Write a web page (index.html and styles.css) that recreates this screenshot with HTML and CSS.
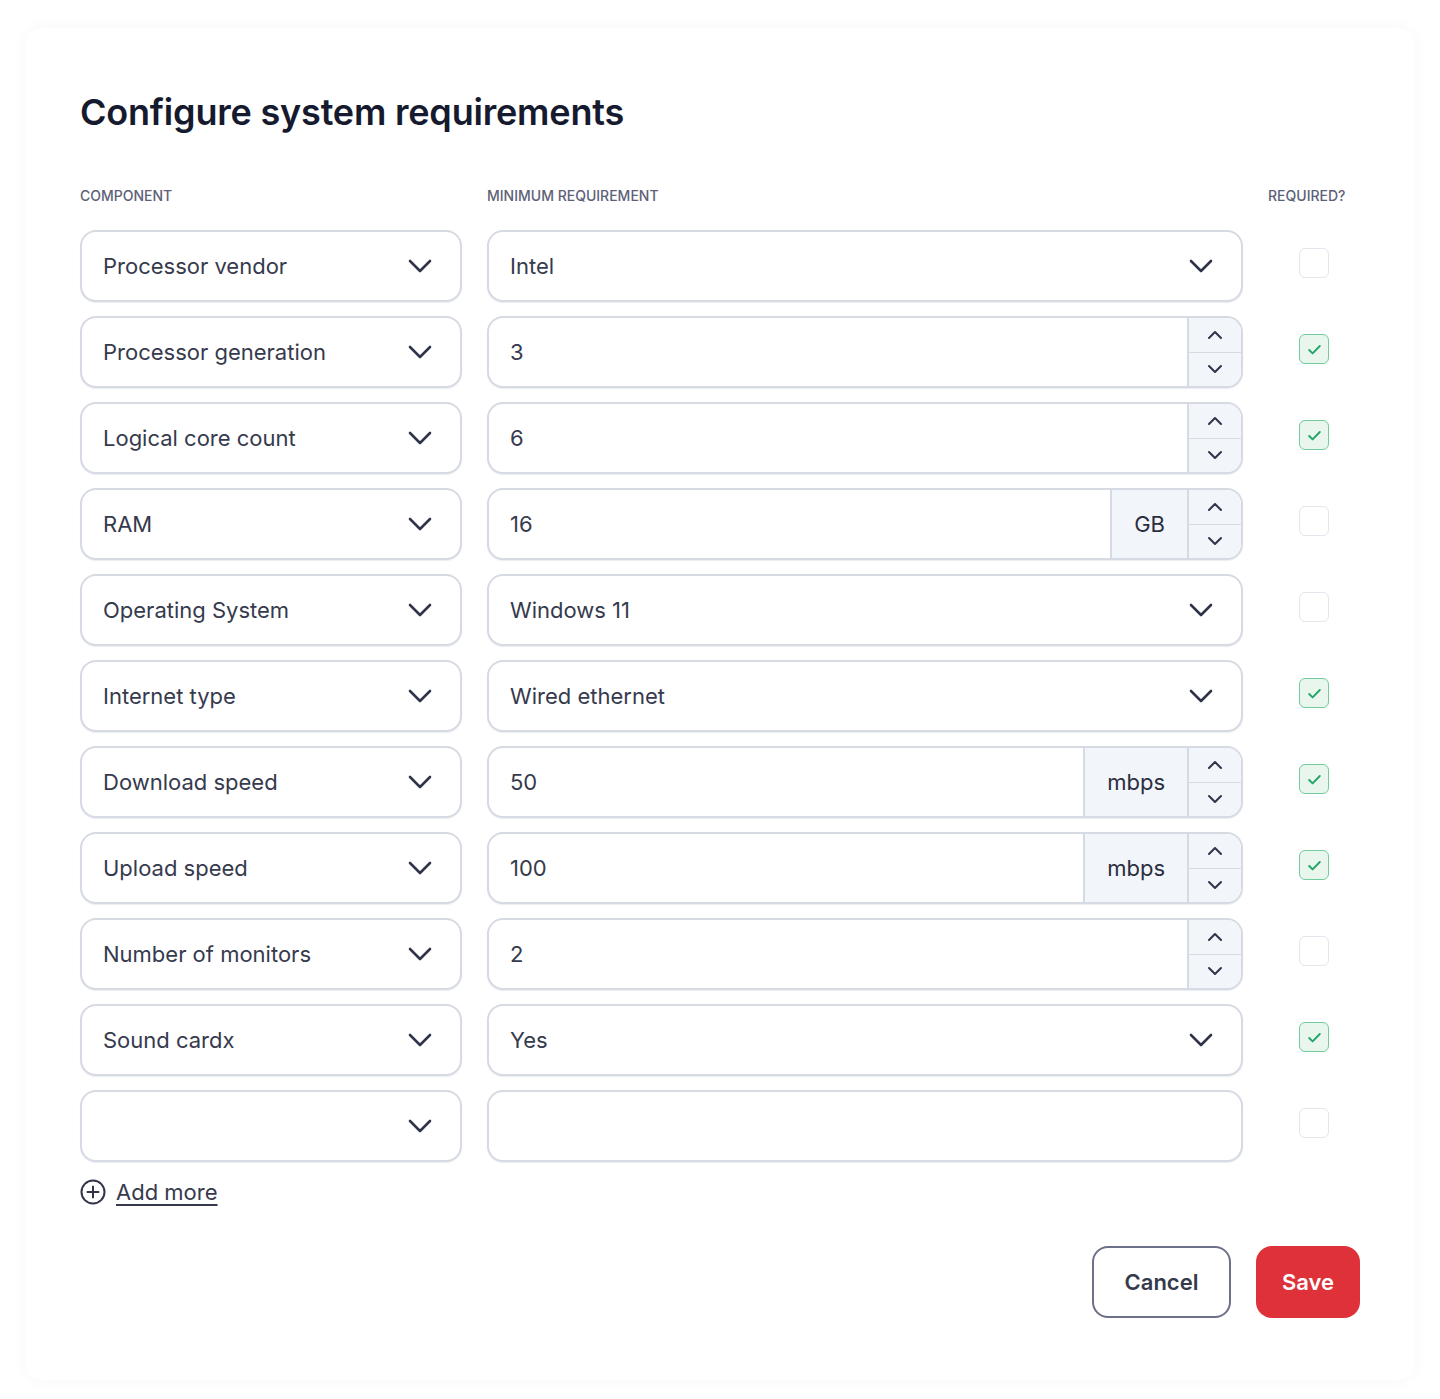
FILE: index.html
```html
<!DOCTYPE html>
<html lang="en">
<head>
<meta charset="utf-8">
<title>Configure system requirements</title>
<link rel="stylesheet" href="styles.css">
</head>
<body>
<main class="card">
  <h1 class="title">Configure system requirements</h1>

  <div class="grid">
    <div class="head">Component</div>
    <div class="head">Minimum requirement</div>
    <div class="head head-req">Required?</div>

    <!-- row 1 -->
    <div class="field select"><span class="val">Processor vendor</span><svg class="chev" viewBox="0 0 24 14"><path d="M2 2l10 10 10-10"/></svg></div>
    <div class="field select"><span class="val">Intel</span><svg class="chev" viewBox="0 0 24 14"><path d="M2 2l10 10 10-10"/></svg></div>
    <div class="req"><span class="cb"></span></div>

    <!-- row 2 -->
    <div class="field select"><span class="val">Processor generation</span><svg class="chev" viewBox="0 0 24 14"><path d="M2 2l10 10 10-10"/></svg></div>
    <div class="field number"><span class="val">3</span><div class="stepper"><span class="step"><svg viewBox="0 0 16 10"><path d="M2 8l6-6 6 6"/></svg></span><span class="step"><svg viewBox="0 0 16 10"><path d="M2 2l6 6 6-6"/></svg></span></div></div>
    <div class="req"><span class="cb on"><svg viewBox="0 0 16 16"><path d="M3 8.5l3.2 3.2 6.8-7"/></svg></span></div>

    <!-- row 3 -->
    <div class="field select"><span class="val">Logical core count</span><svg class="chev" viewBox="0 0 24 14"><path d="M2 2l10 10 10-10"/></svg></div>
    <div class="field number"><span class="val">6</span><div class="stepper"><span class="step"><svg viewBox="0 0 16 10"><path d="M2 8l6-6 6 6"/></svg></span><span class="step"><svg viewBox="0 0 16 10"><path d="M2 2l6 6 6-6"/></svg></span></div></div>
    <div class="req"><span class="cb on"><svg viewBox="0 0 16 16"><path d="M3 8.5l3.2 3.2 6.8-7"/></svg></span></div>

    <!-- row 4 -->
    <div class="field select"><span class="val">RAM</span><svg class="chev" viewBox="0 0 24 14"><path d="M2 2l10 10 10-10"/></svg></div>
    <div class="field number"><span class="val">16</span><span class="unit">GB</span><div class="stepper"><span class="step"><svg viewBox="0 0 16 10"><path d="M2 8l6-6 6 6"/></svg></span><span class="step"><svg viewBox="0 0 16 10"><path d="M2 2l6 6 6-6"/></svg></span></div></div>
    <div class="req"><span class="cb"></span></div>

    <!-- row 5 -->
    <div class="field select"><span class="val">Operating System</span><svg class="chev" viewBox="0 0 24 14"><path d="M2 2l10 10 10-10"/></svg></div>
    <div class="field select"><span class="val">Windows 11</span><svg class="chev" viewBox="0 0 24 14"><path d="M2 2l10 10 10-10"/></svg></div>
    <div class="req"><span class="cb"></span></div>

    <!-- row 6 -->
    <div class="field select"><span class="val">Internet type</span><svg class="chev" viewBox="0 0 24 14"><path d="M2 2l10 10 10-10"/></svg></div>
    <div class="field select"><span class="val">Wired ethernet</span><svg class="chev" viewBox="0 0 24 14"><path d="M2 2l10 10 10-10"/></svg></div>
    <div class="req"><span class="cb on"><svg viewBox="0 0 16 16"><path d="M3 8.5l3.2 3.2 6.8-7"/></svg></span></div>

    <!-- row 7 -->
    <div class="field select"><span class="val">Download speed</span><svg class="chev" viewBox="0 0 24 14"><path d="M2 2l10 10 10-10"/></svg></div>
    <div class="field number"><span class="val">50</span><span class="unit">mbps</span><div class="stepper"><span class="step"><svg viewBox="0 0 16 10"><path d="M2 8l6-6 6 6"/></svg></span><span class="step"><svg viewBox="0 0 16 10"><path d="M2 2l6 6 6-6"/></svg></span></div></div>
    <div class="req"><span class="cb on"><svg viewBox="0 0 16 16"><path d="M3 8.5l3.2 3.2 6.8-7"/></svg></span></div>

    <!-- row 8 -->
    <div class="field select"><span class="val">Upload speed</span><svg class="chev" viewBox="0 0 24 14"><path d="M2 2l10 10 10-10"/></svg></div>
    <div class="field number"><span class="val">100</span><span class="unit">mbps</span><div class="stepper"><span class="step"><svg viewBox="0 0 16 10"><path d="M2 8l6-6 6 6"/></svg></span><span class="step"><svg viewBox="0 0 16 10"><path d="M2 2l6 6 6-6"/></svg></span></div></div>
    <div class="req"><span class="cb on"><svg viewBox="0 0 16 16"><path d="M3 8.5l3.2 3.2 6.8-7"/></svg></span></div>

    <!-- row 9 -->
    <div class="field select"><span class="val">Number of monitors</span><svg class="chev" viewBox="0 0 24 14"><path d="M2 2l10 10 10-10"/></svg></div>
    <div class="field number"><span class="val">2</span><div class="stepper"><span class="step"><svg viewBox="0 0 16 10"><path d="M2 8l6-6 6 6"/></svg></span><span class="step"><svg viewBox="0 0 16 10"><path d="M2 2l6 6 6-6"/></svg></span></div></div>
    <div class="req"><span class="cb"></span></div>

    <!-- row 10 -->
    <div class="field select"><span class="val">Sound cardx</span><svg class="chev" viewBox="0 0 24 14"><path d="M2 2l10 10 10-10"/></svg></div>
    <div class="field select"><span class="val">Yes</span><svg class="chev" viewBox="0 0 24 14"><path d="M2 2l10 10 10-10"/></svg></div>
    <div class="req"><span class="cb on"><svg viewBox="0 0 16 16"><path d="M3 8.5l3.2 3.2 6.8-7"/></svg></span></div>

    <!-- row 11 -->
    <div class="field select"><span class="val"></span><svg class="chev" viewBox="0 0 24 14"><path d="M2 2l10 10 10-10"/></svg></div>
    <div class="field"><span class="val"></span></div>
    <div class="req"><span class="cb"></span></div>
  </div>

  <a class="add" href="#"><svg viewBox="0 0 26 26"><circle cx="13" cy="13" r="11.5"/><path d="M13 7.5v11M7.5 13h11"/></svg><span>Add more</span></a>

  <div class="actions">
    <button class="btn btn-cancel" type="button">Cancel</button>
    <button class="btn btn-save" type="button">Save</button>
  </div>
</main>
</body>
</html>
```

FILE: styles.css
```css
* { box-sizing: border-box; }

html, body {
  margin: 0;
  padding: 0;
  background: #ffffff;
}

body {
  font-family: "Inter", "Noto Sans", "Liberation Sans", sans-serif;
  color: #363a4d;
  padding: 28px 26px 19px;
}

.card {
  background: #fff;
  border-radius: 16px;
  box-shadow: 0 0 18px rgba(20, 24, 40, 0.035);
  padding: 54px;
  height: 1352px;
}

.title {
  margin: 0;
  font-size: 36px;
  font-weight: 600;
  line-height: 60px;
  color: #161a2e;
  letter-spacing: -0.2px;
}

.grid {
  margin-top: 44px;
  display: grid;
  grid-template-columns: 382px 756px 92px;
  grid-template-rows: 30px;
  grid-auto-rows: 72px;
  column-gap: 25px;
  row-gap: 14px;
}

.head {
  font-size: 14px;
  font-weight: 500;
  text-transform: uppercase;
  color: #5d6178;
  line-height: 20px;
}

.head-req { white-space: nowrap; }

.field {
  display: flex;
  align-items: center;
  border: 2px solid #d6dae2;
  border-radius: 16px;
  background: #fff;
  box-shadow: 0 1px 1px rgba(210, 216, 228, 0.45);
  overflow: hidden;
  font-size: 22px;
  color: #363a4d;
}

.val {
  flex: 1;
  padding-left: 21px;
  white-space: nowrap;
}

.select { padding-right: 28px; }

.chev {
  width: 24px;
  height: 14px;
  fill: none;
  stroke: #30344a;
  stroke-width: 2.6;
  stroke-linecap: round;
  stroke-linejoin: round;
}

.unit {
  align-self: stretch;
  display: flex;
  align-items: center;
  padding: 0 22px;
  background: #f2f5f9;
  border-left: 2px solid #d6dae2;
  color: #2a2e40;
}

.stepper {
  align-self: stretch;
  width: 54px;
  display: flex;
  flex-direction: column;
  background: #f2f5f9;
  border-left: 2px solid #d6dae2;
}

.step {
  flex: 1;
  display: flex;
  align-items: center;
  justify-content: center;
}

.step + .step { border-top: 1.5px solid #d6dae2; }

.step svg {
  width: 16px;
  height: 10px;
  fill: none;
  stroke: #30344a;
  stroke-width: 2;
  stroke-linecap: round;
  stroke-linejoin: round;
}

.req {
  display: flex;
  align-items: center;
  justify-content: center;
  padding-bottom: 6px;
}

.cb {
  width: 30px;
  height: 30px;
  border: 1.5px solid #e3e6ec;
  border-radius: 6px;
  background: #fff;
  display: flex;
  align-items: center;
  justify-content: center;
}

.cb.on {
  background: #e9f6ee;
  border-color: #72cc9b;
}

.cb svg {
  width: 17px;
  height: 17px;
  fill: none;
  stroke: #23a565;
  stroke-width: 1.8;
  stroke-linecap: round;
  stroke-linejoin: round;
}

.add {
  margin-top: 17px;
  display: inline-flex;
  align-items: center;
  gap: 10px;
  color: #363a4d;
  font-size: 22px;
  text-decoration: none;
}

.add svg {
  width: 26px;
  height: 26px;
  fill: none;
  stroke: #30344a;
  stroke-width: 2;
  stroke-linecap: round;
}

.add span {
  text-decoration: underline;
  text-underline-offset: 4px;
  text-decoration-thickness: 1.5px;
}

.actions {
  margin-top: 37px;
  display: flex;
  justify-content: flex-end;
  gap: 25px;
}

.btn {
  height: 72px;
  border-radius: 16px;
  font-family: inherit;
  font-size: 22px;
  font-weight: 600;
  cursor: pointer;
}

.btn-cancel {
  width: 139px;
  background: #fff;
  border: 2px solid #6d7089;
  color: #363a4d;
}

.btn-save {
  width: 104px;
  background: #de3139;
  border: none;
  color: #fff;
}
```
